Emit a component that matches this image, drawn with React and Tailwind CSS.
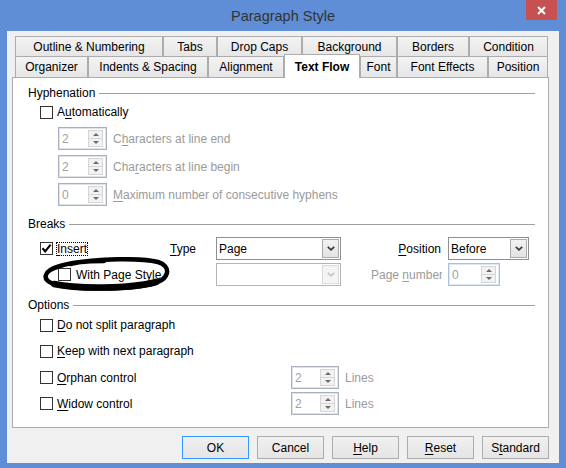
import React from "react";

const U = ({ children }) => (
  <span className="underline underline-offset-[2px] decoration-1">{children}</span>
);

function Checkbox({ checked }) {
  return (
    <span className="w-[13px] h-[13px] border border-[#333333] bg-white flex items-center justify-center shrink-0">
      {checked && (
        <svg width="11" height="11" viewBox="0 0 11 11">
          <path d="M1.5 5.2 L4.2 8.3 L9.6 1.6" fill="none" stroke="#000" strokeWidth="2.1" />
        </svg>
      )}
    </span>
  );
}

function Spin({ value, className, blue }) {
  return (
    <div
      className={`h-[23px] flex items-stretch bg-white border shrink-0 ${
        blue
          ? "border-[#a9c0e2] shadow-[inset_0_0_0_1px_#dce6f4]"
          : "border-[#abb1bc] shadow-[inset_0_0_0_1px_#dfe3e8]"
      } ${className}`}
    >
      <span className="flex-1 pl-[3px] flex items-center text-[#a0a0a0]">{value}</span>
      <span className="w-[15px] my-[2px] mr-[3px] flex flex-col border border-[#d6d6d6] bg-[#f2f2f2]">
        <span className="flex-1 flex items-center justify-center border-b border-[#d6d6d6]">
          <span className="w-0 h-0 border-x-[3px] border-x-transparent border-b-[3px] border-b-[#6b6b6b]" />
        </span>
        <span className="flex-1 flex items-center justify-center">
          <span className="w-0 h-0 border-x-[3px] border-x-transparent border-t-[3px] border-t-[#6b6b6b]" />
        </span>
      </span>
    </div>
  );
}

function Select({ value, disabled, className }) {
  return (
    <div
      className={`h-[23px] flex items-center bg-white border shrink-0 ${
        disabled ? "border-[#b4b4b4]" : "border-[#8e8f8f]"
      } ${className}`}
    >
      <span className="flex-1 pl-[2px]">{value}</span>
      <span
        className={`w-[17px] h-[19px] mr-[1px] border flex items-center justify-center ${
          disabled
            ? "border-[#dadada] bg-[#f4f4f4]"
            : "border-[#acacac] bg-gradient-to-b from-[#f2f2f2] to-[#e3e3e3]"
        }`}
      >
        <svg width="8" height="5" viewBox="0 0 8 5">
          <path
            d="M0.8 0.8 L4 3.8 L7.2 0.8"
            fill="none"
            stroke={disabled ? "#c6c6c6" : "#3a3a3a"}
            strokeWidth="1.7"
          />
        </svg>
      </span>
    </div>
  );
}

function Header({ label, className }) {
  return (
    <div className={`flex items-center h-[16px] ${className}`}>
      <span>{label}</span>
      <div className="flex-1 h-px bg-[#a0a0a0] ml-[4px]" />
    </div>
  );
}

function Tab({ label, className, active }) {
  if (active) {
    return (
      <div
        className={`h-[24px] -mt-[2px] relative z-10 bg-white border-t border-x border-[#acacac] flex items-center justify-center font-bold ${className}`}
      >
        {label}
      </div>
    );
  }
  return (
    <div
      className={`h-full border-t border-x border-[#acacac] bg-gradient-to-b from-[#f3f3f3] to-[#e6e6e6] flex items-center justify-center ${className}`}
    >
      {label}
    </div>
  );
}

function Btn({ children, primary }) {
  return (
    <button
      className={`w-[67px] h-[23px] border bg-gradient-to-b from-[#f0f0f0] to-[#e5e5e5] text-black ${
        primary ? "border-[#3399ff]" : "border-[#acacac]"
      }`}
    >
      {children}
    </button>
  );
}

export default function App() {
  return (
    <div className="w-[566px] h-[468px] bg-[#5f8dd6] flex flex-col font-['Liberation_Sans',Arial,sans-serif] text-[12px] leading-[16px] text-black overflow-hidden">
      {/* title bar */}
      <div className="h-[31px] flex items-start shrink-0">
        <div className="flex-1" />
        <div className="h-[31px] flex items-center text-[14.5px] text-[#333333]">Paragraph Style</div>
        <div className="flex-1 flex justify-end">
          <div className="w-[31px] h-[20px] mr-[9px] bg-[#c75050] flex items-center justify-center">
            <svg width="9" height="9" viewBox="0 0 9 9">
              <path d="M1 1 L8 8 M8 1 L1 8" stroke="#fff" strokeWidth="2" />
            </svg>
          </div>
        </div>
      </div>

      {/* client */}
      <div className="ml-[7px] w-[552px] h-[432px] bg-[#f0f0f0] pt-[5px] flex flex-col">
        {/* tab rows */}
        <div className="ml-[8px] w-[533px] h-[20px] flex">
          <Tab label="Outline & Numbering" className="w-[148px]" />
          <Tab label="Tabs" className="w-[54px]" />
          <Tab label="Drop Caps" className="w-[85px]" />
          <Tab label="Background" className="w-[95px]" />
          <Tab label="Borders" className="w-[72px]" />
          <Tab label="Condition" className="w-[79px]" />
        </div>
        <div className="ml-[8px] w-[533px] h-[21px] flex items-start">
          <Tab label="Organizer" className="w-[73px]" />
          <Tab label="Indents & Spacing" className="w-[120px]" />
          <Tab label="Alignment" className="w-[76px]" />
          <Tab label="Text Flow" className="w-[76px]" active />
          <Tab label="Font" className="w-[37px]" />
          <Tab label="Font Effects" className="w-[91px]" />
          <Tab label="Position" className="w-[60px]" />
        </div>

        {/* panel */}
        <div className="relative ml-[5px] w-[537px] h-[351px] bg-white border border-[#acacac] pl-[15px] pr-[13px] flex flex-col">
          <Header label="Hyphenation" className="mt-[7px]" />
          <div className="mt-[3px] h-[16px] ml-[12px] flex items-center gap-[4px]">
            <Checkbox />
            <span>
              A<U>u</U>tomatically
            </span>
          </div>
          <div className="mt-[7px] h-[23px] ml-[30px] flex items-center">
            <Spin value="2" className="w-[49px]" />
            <span className="ml-[6px] text-[#9a9a9a]">
              C<U>h</U>aracters at line end
            </span>
          </div>
          <div className="mt-[5px] h-[23px] ml-[30px] flex items-center">
            <Spin value="2" className="w-[49px]" />
            <span className="ml-[6px] text-[#9a9a9a]">
              Cha<U>r</U>acters at line begin
            </span>
          </div>
          <div className="mt-[5px] h-[23px] ml-[30px] flex items-center">
            <Spin value="0" className="w-[49px]" />
            <span className="ml-[6px] text-[#9a9a9a]">
              <U>M</U>aximum number of consecutive hyphens
            </span>
          </div>

          <Header label="Breaks" className="mt-[10px]" />
          <div className="mt-[5px] h-[23px] ml-[12px] flex items-center">
            <div className="w-[130px] flex items-center">
              <Checkbox checked />
              <span className="ml-[3px] h-[14px] leading-[12px] border border-dotted border-black">
                <U>I</U>nsert
              </span>
            </div>
            <span className="w-[46px]">
              <U>T</U>ype
            </span>
            <Select value="Page" className="w-[125px]" />
            <span className="w-[107px] pr-[7px] text-right">
              <U>P</U>osition
            </span>
            <Select value="Before" className="w-[81px]" />
          </div>
          <div className="mt-[3px] h-[23px] ml-[12px] flex items-center">
            <div className="w-[130px] pl-[18px] flex items-center gap-[5px]">
              <Checkbox />
              <span>
                With Page St<U>y</U>le
              </span>
            </div>
            <span className="w-[46px]" />
            <Select value="" disabled className="w-[125px]" />
            <span className="w-[107px] pl-[30px] pr-[6px]">
              <span className="block w-[71px] overflow-hidden whitespace-nowrap text-[#9a9a9a]">
                Page <U>n</U>umber
              </span>
            </span>
            <Spin value="0" className="w-[52px]" blue />
          </div>

          <Header label="Options" className="mt-[11px]" />
          <div className="mt-[4px] h-[16px] ml-[12px] flex items-center gap-[4px]">
            <Checkbox />
            <span>
              <U>D</U>o not split paragraph
            </span>
          </div>
          <div className="mt-[10px] h-[16px] ml-[12px] flex items-center gap-[4px]">
            <Checkbox />
            <span>
              <U>K</U>eep with next paragraph
            </span>
          </div>
          <div className="mt-[7px] h-[23px] ml-[12px] flex items-center">
            <div className="w-[251px] flex items-center gap-[4px]">
              <Checkbox />
              <span>
                <U>O</U>rphan control
              </span>
            </div>
            <Spin value="2" className="w-[48px]" />
            <span className="ml-[6px] text-[#9a9a9a]">Lines</span>
          </div>
          <div className="mt-[3px] h-[23px] ml-[12px] flex items-center">
            <div className="w-[251px] flex items-center gap-[4px]">
              <Checkbox />
              <span>
                <U>W</U>idow control
              </span>
            </div>
            <Spin value="2" className="w-[48px]" />
            <span className="ml-[6px] text-[#9a9a9a]">Lines</span>
          </div>

          {/* hand-drawn ellipse annotation */}
          <svg
            className="absolute left-[29px] top-[179px] pointer-events-none"
            width="130"
            height="34"
            viewBox="0 0 130 34"
          >
            <path
              d="M28 7 C55 1 100 1 116 5 C129 9 129 22 110 27 C85 33 35 33 12 27 C0 23 0 14 18 9 C30 5 45 4 62 4"
              fill="none"
              stroke="#000"
              strokeWidth="4.5"
              strokeLinecap="round"
            />
            <path
              d="M114 25 C88 32 35 32 12 27"
              fill="none"
              stroke="#000"
              strokeWidth="6.5"
              strokeLinecap="round"
            />
          </svg>
        </div>

        {/* buttons */}
        <div className="mt-[8px] pr-[10px] flex justify-end gap-[8px]">
          <Btn primary>OK</Btn>
          <Btn>Cancel</Btn>
          <Btn>
            <U>H</U>elp
          </Btn>
          <Btn>
            <U>R</U>eset
          </Btn>
          <Btn>
            S<U>t</U>andard
          </Btn>
        </div>
      </div>
    </div>
  );
}
